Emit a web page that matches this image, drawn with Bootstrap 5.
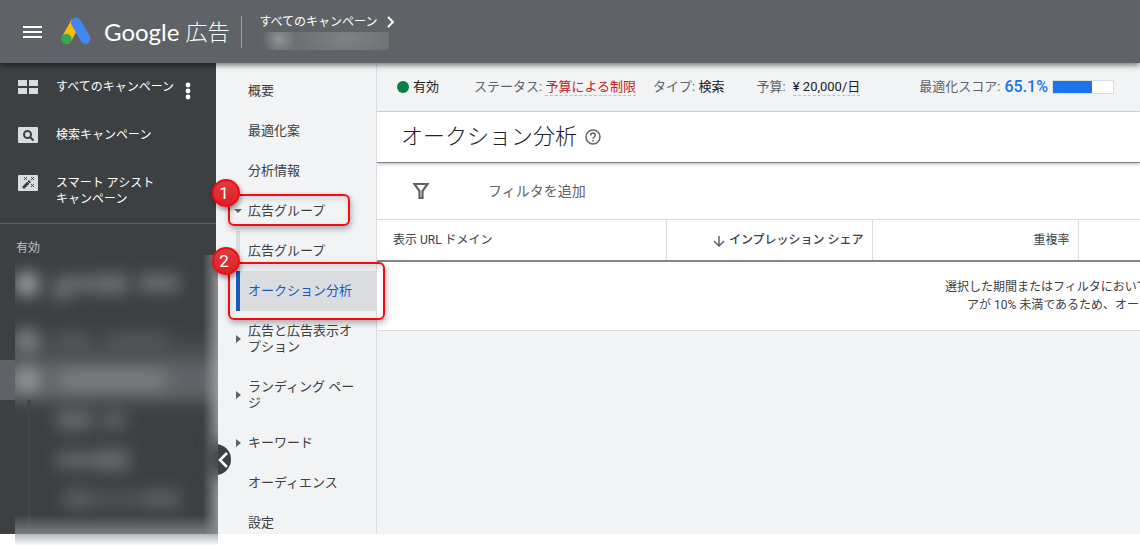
<!DOCTYPE html>
<html lang="ja">
<head>
<meta charset="utf-8">
<meta name="viewport" content="width=device-width, initial-scale=1">
<title>Google 広告 - オークション分析</title>
<link rel="stylesheet" href="https://cdn.jsdelivr.net/npm/bootstrap@5.3.0/dist/css/bootstrap.min.css">
<style>
body{font-family:Roboto,"Noto Sans CJK JP",sans-serif;font-size:13px;line-height:16px;color:#3c4043;background:#fff;overflow-x:hidden;min-height:100vh}
a{text-decoration:none;color:inherit}
.topbar{height:63px;background:#5f6368;z-index:5;box-shadow:0 2px 6px rgba(0,0,0,.55)}
.icon-btn{border:0;background:none;padding:0;line-height:0;color:#fff}
.menu-btn{margin-left:23px}
.brand{font-family:Lato,"Noto Sans CJK JP",sans-serif;font-size:24px;line-height:32px;color:#fff}
.brand-logo{margin-right:10px}
.brand-ja{font-size:22px;font-weight:300;margin-left:6px}
.account{border-left:1px solid #9aa0a6;height:32px;margin-left:12px;padding-left:17px;font-size:12px;line-height:12px;color:#fff}
.account-id{flex:none;width:130px;height:18px;background:radial-gradient(circle at 20px 7px,#909396 0,transparent 16px),radial-gradient(ellipse 50px 22px at 88px 6px,#7e8185 0,transparent 100%),linear-gradient(90deg,#5f6368,#6d7174 30px,#6d7174)}
.sidebar{width:216px;flex:none;background:#3c4043;color:#fff;font-size:12px}
.side-link{height:48px;padding:16px 0 0 18px}
.side-link svg{margin-right:18px;flex:none}
.side-link.tall{height:64px}
.side-link .more{margin:3px 0 0 11px}
.side-head{border-top:1px solid #5f6368;padding:16px;color:#bdc1c6}
.side-current{height:40px;margin-top:88px;background:#5f6368}
.redacted{left:15px;top:192px;width:203px;height:290px}
.collapse-btn{left:200px;top:381px;width:31px;height:31px;border-radius:50%;background:#3c4043}
.subnav{width:161px;flex:none;background:#f1f3f4;border-right:1px solid #dadce0;padding-top:8px}
.sub-link{display:block;position:relative;padding:12px 16px 12px 32px}
.sub-link.last{padding-bottom:3px}
.sub-link.child{border-left:4px solid #dadce0}
.sub-children{margin-left:20px}
.sub-children .sub-link{padding-left:8px}
.sub-link.current{background:#dadce0;color:#185abc;border-left-color:#185abc}
.caret-r,.caret-d{position:absolute;left:20px;top:50%;border:4px solid transparent}
.caret-r{margin-top:-4px;border-left:5px solid #5f6368;border-right:0}
.caret-d{left:18px;margin-top:-2px;border-top:4px solid #5f6368;border-bottom:0}
.callout{position:absolute;z-index:3;border:2px solid #f30b12;border-radius:6px;box-shadow:1px 3px 6px rgba(0,0,0,.3),inset 1px 3px 6px rgba(0,0,0,.12)}
.callout-num{position:absolute;left:-18px;top:-17px;width:28px;height:28px;border:2px solid #f30b12;border-radius:50%;background:linear-gradient(#e23c3f,#d92126);color:#fff;font-size:17px;line-height:24px;text-align:center;padding-right:4px;box-shadow:1px 3px 5px rgba(0,0,0,.4)}
.c-one{left:12px;top:3px;width:122px;height:32px}
.c-two{left:-12px;top:-9px;width:157px;height:58px}
.content{background:#f1f3f4}
.status{height:49px;border-bottom:1px solid #dadce0;padding-left:20px;color:#5f6368;white-space:nowrap}
.status b{font-weight:400;color:#202124}
.status .fact{margin-left:35px}
.status .fact-near{margin-left:17px}
.status .fact-mid{margin-left:32px}
.status .fact-far{margin-left:59px}
.dot{width:12px;height:12px;border-radius:50%;background:#0b8043}
.dashed{border-bottom:1px dashed #bdc1c6;padding-bottom:1px}
.status b.limited{color:#c5221f}
.score{color:#1a73e8;font-size:16px;font-weight:500}
.meter-box{width:62px;height:14px;border:1px solid #dadce0;background:#fff}
.meter-fill{height:12px;background:#1a73e8}
.title-bar{height:51px;padding-left:24px;background:#fff;border-bottom:1px solid #80868b;box-shadow:0 1px 3px rgba(0,0,0,.3);z-index:1}
.title-bar h1{font-size:22px;line-height:28px;font-weight:300;color:#202124}
.filter-bar{height:57px;padding-left:34px;background:#fff;border-bottom:1px solid #dadce0}
.filter-input{border:0;outline:0;font-size:14px;margin-left:57px;padding:0;background:none;color:#5f6368}
.filter-input::placeholder{color:#5f6368;opacity:1}
.report{table-layout:fixed;width:100%;background:#fff;font-size:12px;border-bottom:1px solid #dadce0}
.report th{height:41px;padding:0 8px 0 16px;font-weight:400;border-right:1px solid #dadce0;border-bottom:2px solid #80868b;white-space:nowrap}
.report th.sorted{font-weight:500}
.report th:last-child{border-right:0}
.report td{padding:16px 0 16px 568px;line-height:18px;white-space:nowrap;overflow:hidden}
.report .second-line{padding-left:22px}
</style>
<script src="https://cdn.jsdelivr.net/npm/bootstrap@5.3.0/dist/js/bootstrap.bundle.min.js"></script>
</head>
<body>
<header class="topbar d-flex align-items-center position-relative">
  <button class="icon-btn menu-btn" aria-label="メニュー"><svg width="19" height="14" viewBox="0 0 19 14"><path d="M0 1h19v2H0zM0 6h19v2H0zM0 11h19v2H0z" fill="#fff"/></svg></button>
  <a href="#" class="brand d-flex align-items-center ms-3">
    <svg class="brand-logo" width="36" height="30" viewBox="0 0 36 30"><path d="M18 5 8.500 22" stroke="#fbbc04" stroke-width="10"/><path d="M18 5.500 27.500 22" stroke="#4285f4" stroke-width="10" stroke-linecap="round"/><circle cx="8.500" cy="22" r="5.200" fill="#34a853"/></svg>
    <span>Google</span><span class="brand-ja">広告</span>
  </a>
  <div class="account d-flex flex-column">
    <a href="#" class="d-flex align-items-center mb-1">すべてのキャンペーン<svg class="ms-2" width="10" height="12" viewBox="0 0 10 12"><path d="M3 1l5 5-5 5" fill="none" stroke="#fff" stroke-width="2"/></svg></a>
    <div class="account-id"></div>
  </div>
</header>
<div class="d-flex">
  <aside class="sidebar position-relative">
    <a href="#" class="side-link d-flex"><svg width="20" height="16" viewBox="0 0 20 16" fill="#dadce0"><path d="M0 1h9v6H0zM11 1h9v6h-9zM0 9h9v6H0zM11 9h9v6h-9z"/></svg><span>すべてのキャンペーン</span><svg class="more" width="6" height="18" viewBox="0 0 6 18" fill="#fff"><circle cx="3" cy="3" r="2.400"/><circle cx="3" cy="9" r="2.400"/><circle cx="3" cy="15" r="2.400"/></svg></a>
    <a href="#" class="side-link d-flex"><svg width="20" height="16" viewBox="0 0 20 16"><rect width="20" height="16" rx="1" fill="#dadce0"/><circle cx="9.500" cy="7.500" r="3.500" fill="none" stroke="#3c4043" stroke-width="2"/><path d="M12 10l3.500 3.500" stroke="#3c4043" stroke-width="2"/></svg><span>検索キャンペーン</span></a>
    <a href="#" class="side-link tall d-flex"><svg width="20" height="16" viewBox="0 0 20 16"><rect width="20" height="16" rx="1" fill="#dadce0"/><path d="M5 13l7-7" stroke="#3c4043" stroke-width="3"/><path d="M9 6l3 3" stroke="#dadce0" stroke-width=".7"/><path d="M6 2l3 3m0-3L6 5M13 2l3 3m0-3l-3 3M13 9l3 3m0-3l-3 3" stroke="#3c4043" stroke-width=".9"/></svg><span>スマート アシスト<br>キャンペーン</span></a>
    <div class="side-head">有効</div>
    <div class="side-current"></div>
    <button class="icon-btn collapse-btn position-absolute" aria-label="閉じる"><svg class="ms-3" width="12" height="20" viewBox="0 0 12 20"><path d="M9 3L2 10l7 7" fill="none" stroke="#fff" stroke-width="2.600"/></svg></button>
    <svg class="redacted position-absolute" viewBox="0 0 203 290" aria-hidden="true">
      <defs>
        <filter id="soft" x="-50%" y="-50%" width="200%" height="200%"><feGaussianBlur stdDeviation="8"/></filter>
        <linearGradient id="edge"><stop offset="0" stop-color="#a8a9ab" stop-opacity="0"/><stop offset="1" stop-color="#a8a9ab" stop-opacity=".75"/></linearGradient>
        <linearGradient id="foot" x2="0" y2="1"><stop offset="0" stop-color="#85888a" stop-opacity="0"/><stop offset="1" stop-color="#85888a" stop-opacity=".85"/></linearGradient>
        <linearGradient id="fade" x2="0" y2="1"><stop offset="0" stop-color="#b4b6b7"/><stop offset="1" stop-color="#f8f9f9"/></linearGradient>
      </defs>
      <path d="M0 0h203v279H0z" fill="#3c4043"/>
      <g filter="url(#soft)">
        <path d="M-20 106h250v40H-20z" fill="#606467"/>
        <path d="M-20 84h250v22H-20z" fill="#484c4f"/>
        <circle cx="12" cy="29" r="12" fill="#9fa3a5"/><circle cx="12" cy="85" r="12" fill="#7c8083"/><circle cx="12" cy="125" r="12" fill="#94979a"/>
        <path d="M40 22h70v14H53v10H40zM85 20h28v18H85zM124 20h40v16h-40z" fill="#6e7275"/>
        <path d="M40 78h35v14H40zM92 78h60v14H92z" fill="#54585b"/>
        <path d="M45 116h105v18H45z" fill="#7c7f82"/>
        <path d="M42 156h35v18H42zM88 158h22v14H88z" fill="#676b6e"/>
        <path d="M42 198h70v14H42zM82 195h32v20H82z" fill="#676b6e"/>
        <path d="M50 236h24v16H50zM74 240h90v8H74zM130 236h34v16h-34z" fill="#5f6366"/>
      </g>
      <path d="M12 145h4v134h-4z" fill="#414548"/>
      <path d="M188 0h15v279h-15z" fill="url(#edge)"/>
      <ellipse cx="205" cy="204" rx="13" ry="20" fill="#3c4043" filter="url(#soft)"/>
      <path d="M0 260h203v19H0z" fill="url(#foot)"/>
      <path d="M0 279h203v11H0z" fill="url(#fade)"/>
    </svg>
  </aside>
  <nav class="subnav">
    <a href="#" class="sub-link">概要</a>
    <a href="#" class="sub-link">最適化案</a>
    <a href="#" class="sub-link">分析情報</a>
    <a href="#" class="sub-link"><i class="caret-d"></i>広告グループ<span class="callout c-one"><span class="callout-num">1</span></span></a>
    <div class="sub-children">
      <a href="#" class="sub-link child">広告グループ</a>
      <a href="#" class="sub-link child current" aria-current="page">オークション分析<span class="callout c-two"><span class="callout-num">2</span></span></a>
    </div>
    <a href="#" class="sub-link"><i class="caret-r"></i>広告と広告表示オプション</a>
    <a href="#" class="sub-link"><i class="caret-r"></i>ランディング ページ</a>
    <a href="#" class="sub-link"><i class="caret-r"></i>キーワード</a>
    <a href="#" class="sub-link">オーディエンス</a>
    <a href="#" class="sub-link last">設定</a>
  </nav>
  <main class="content flex-grow-1 overflow-hidden">
    <div class="status d-flex align-items-center">
      <span class="dot me-1"></span><b>有効</b>
      <span class="fact">ステータス: <b class="limited dashed">予算による制限</b></span>
      <span class="fact-near">タイプ: <b>検索</b></span>
      <span class="fact-mid">予算: <b class="dashed ms-1">¥ 20,000/日</b></span>
      <span class="fact-far">最適化スコア:</span><span class="score ms-1">65.1%</span>
      <div class="meter-box ms-1"><div class="meter-fill" style="width:65.1%"></div></div>
    </div>
    <div class="title-bar d-flex align-items-center position-relative">
      <h1 class="mb-0 me-2">オークション分析</h1>
      <button class="icon-btn" aria-label="ヘルプ"><svg width="16" height="16" viewBox="0 0 16 16" fill="none" stroke="#5f6368"><circle cx="8" cy="8" r="7" stroke-width="1.500"/><path d="M5.700 6.500C5.700 3.300 10.300 3.300 10.300 6.300 10.300 8 8 8 8 9.800" stroke-width="1.500"/><path d="M8 11v1.600" stroke-width="1.600"/></svg></button>
    </div>
    <div class="filter-bar d-flex align-items-center">
      <button class="icon-btn" aria-label="フィルタ"><svg width="20" height="18" viewBox="0 0 20 18"><path d="M3.500 2h13L11.500 9v7h-3V9z" fill="none" stroke="#5f6368" stroke-width="2.200"/></svg></button>
      <input class="filter-input" type="text" placeholder="フィルタを追加" aria-label="フィルタを追加">
    </div>
    <table class="report">
      <colgroup><col style="width:289px"><col style="width:206px"><col style="width:206px"><col></colgroup>
      <thead><tr><th>表示 URL ドメイン</th><th class="sorted text-end"><svg class="me-1" width="12" height="12" viewBox="0 0 12 12" fill="none" stroke="#5f6368" stroke-width="1.500"><path d="M6 1v10M1 6l5 5 5-5"/></svg>インプレッション シェア</th><th class="text-end">重複率</th><th></th></tr></thead>
      <tbody><tr><td colspan="4">選択した期間またはフィルタにおいて<br><span class="second-line">アが 10% 未満であるため、オー</span></td></tr></tbody>
    </table>
  </main>
</div>
</body>
</html>
